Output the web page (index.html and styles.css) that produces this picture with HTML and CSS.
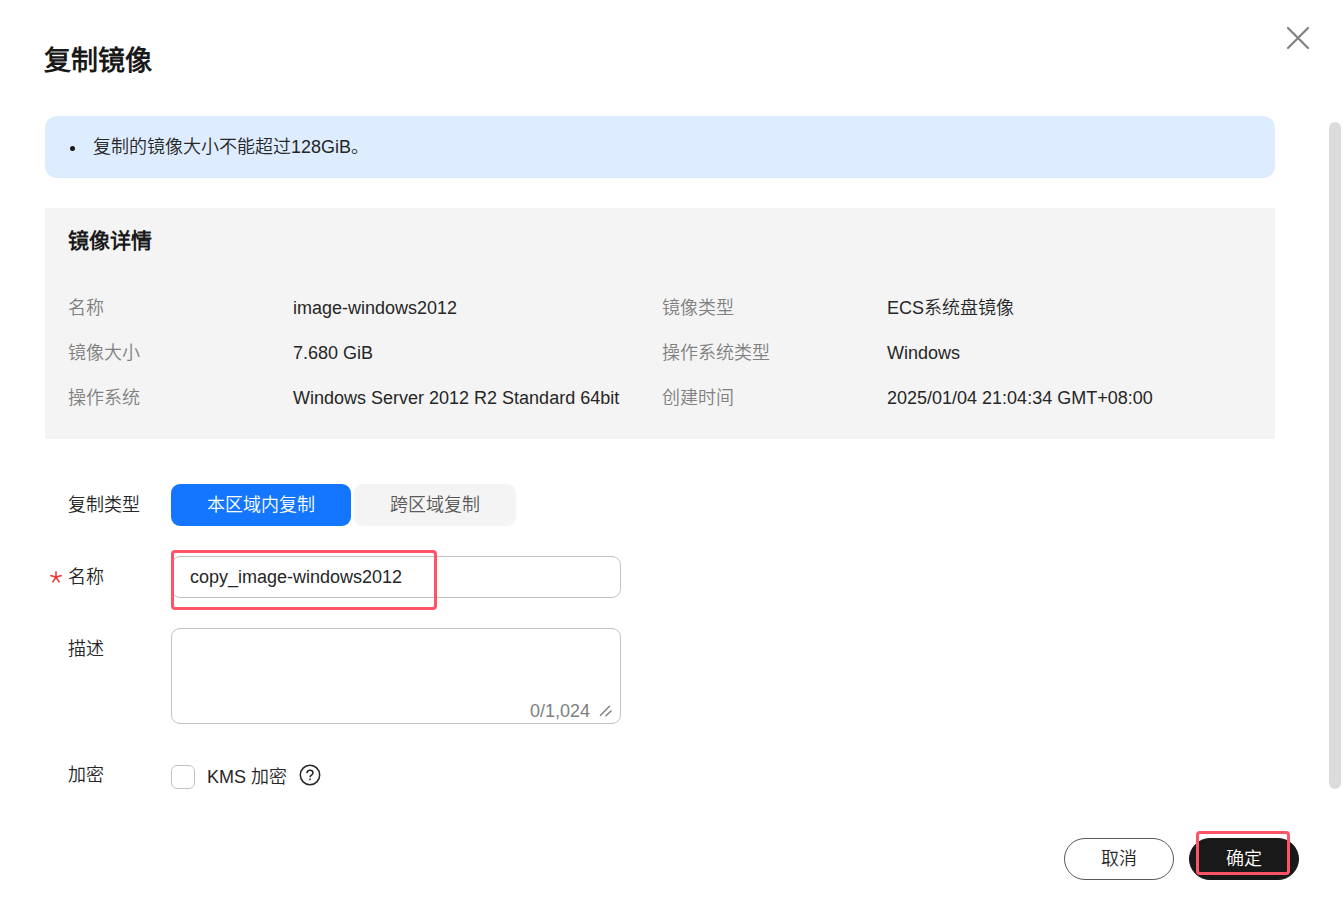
FILE: index.html
```html
<!DOCTYPE html>
<html lang="zh-CN">
<head>
<meta charset="utf-8">
<title>复制镜像</title>
<meta name="viewport" content="width=device-width, initial-scale=1">
<link rel="stylesheet" href="styles.css">
</head>
<body>
<main class="dialog">
  <header class="dialog-header">
    <h1 class="dialog-title">复制镜像</h1>
    <button class="close" type="button" aria-label="关闭">
      <svg viewBox="0 0 24 24" width="24" height="24" aria-hidden="true"><path d="M2 2 22 22M22 2 2 22"/></svg>
    </button>
  </header>

  <div class="dialog-body">
    <div class="content">
      <ul class="notice">
        <li>复制的镜像大小不能超过128GiB。</li>
      </ul>

      <section class="details">
        <h2 class="details-title">镜像详情</h2>
        <dl class="details-grid">
          <div class="pair"><dt>名称</dt><dd>image-windows2012</dd></div>
          <div class="pair"><dt>镜像类型</dt><dd>ECS系统盘镜像</dd></div>
          <div class="pair"><dt>镜像大小</dt><dd>7.680 GiB</dd></div>
          <div class="pair"><dt>操作系统类型</dt><dd>Windows</dd></div>
          <div class="pair"><dt>操作系统</dt><dd>Windows Server 2012 R2 Standard 64bit</dd></div>
          <div class="pair"><dt>创建时间</dt><dd>2025/01/04 21:04:34 GMT+08:00</dd></div>
        </dl>
      </section>

      <form class="form" id="copy-form">
        <div class="row">
          <span class="label" id="type-label">复制类型</span>
          <div class="segments" role="group" aria-labelledby="type-label">
            <button class="segment selected" type="button" aria-pressed="true">本区域内复制</button>
            <button class="segment" type="button" aria-pressed="false">跨区域复制</button>
          </div>
        </div>
        <div class="row">
          <label class="label required" for="name"><svg class="star" viewBox="0 0 12 12" width="12" height="12" aria-hidden="true"><path d="M6 6V.2M6 6 .3 4.500M6 6l5.700-1.500M6 6l-3.400 5.400M6 6l3.400 5.400"/></svg>名称</label>
          <div class="field">
            <input class="text-input" id="name" type="text" value="copy_image-windows2012">
            <span class="marker marker-name"></span>
          </div>
        </div>
        <div class="row">
          <label class="label" for="desc">描述</label>
          <div class="field">
            <textarea class="text-area" id="desc"></textarea>
            <span class="counter">0/1,024
              <svg viewBox="0 0 14 14" width="14" height="14" aria-hidden="true"><path d="M1.500 11.200 10.500 2.200M7 11.700l5-4.700"/></svg>
            </span>
          </div>
        </div>
        <div class="row">
          <span class="label">加密</span>
          <div class="check-group">
            <input class="checkbox" id="kms" type="checkbox">
            <label class="check-label" for="kms">KMS 加密</label>
            <button class="help" type="button" aria-label="帮助">
              <svg viewBox="0 0 22 22" width="22" height="22" aria-hidden="true"><circle cx="11" cy="11" r="9.700"/><path d="M8 9.200C8 7.300 9.200 6.200 11 6.200s3 1.100 3 2.700c0 2-3 2.300-3 4.300M11 14.400v1.800"/></svg>
            </button>
          </div>
        </div>
      </form>
    </div>
    <div class="scrollbar" aria-hidden="true"></div>
  </div>

  <footer class="dialog-footer">
    <button class="action" type="button">取消</button>
    <div class="action-wrap">
      <button class="action primary" type="submit" form="copy-form">确定</button>
      <span class="marker marker-ok"></span>
    </div>
  </footer>
</main>
</body>
</html>
```
FILE: styles.css
```css
* { box-sizing: border-box; }

body {
  margin: 0;
  background: #fff;
  color: #262626;
  font: 18px/24px "Liberation Sans", "Noto Sans CJK SC DemiLight", "Noto Sans CJK SC", sans-serif;
  font-weight: 350;
}

button, input, textarea { font: inherit; color: inherit; }
button { cursor: pointer; }
h1, h2, dl, dd, ul { margin: 0; }
svg { display: block; fill: none; stroke: currentColor; }

.dialog {
  display: flex;
  flex-direction: column;
  min-height: 100vh;
}

.dialog-header {
  display: flex;
  justify-content: space-between;
  align-items: flex-start;
  padding: 26px 34px 37px 44px;
}

.dialog-title {
  padding-top: 17px;
  color: #191919;
  font-size: 27px;
  line-height: 36px;
  font-weight: 700;
}

.close {
  padding: 0;
  border: 0;
  background: none;
  color: #808080;
}
.close svg { stroke-width: 2.2; stroke-linecap: round; }

.dialog-body {
  display: flex;
  gap: 54px;
  padding: 0 3px 0 45px;
}
.content { flex: 1; min-width: 0; }

.scrollbar {
  width: 12px;
  margin: 6px 0 7px;
  border-radius: 6px;
  background: #dbdbdb;
}

.notice {
  padding: 19px 24px;
  border-radius: 12px;
  background: #deecff;
  list-style: none;
}
.notice li {
  display: flex;
  align-items: center;
}
.notice li::before {
  content: "";
  width: 5px;
  height: 5px;
  margin: 3px 18px 0 1px;
  border-radius: 50%;
  background: #191919;
}

.details {
  margin-top: 30px;
  padding: 18px 19px 18px 23px;
  background: #f4f4f4;
}
.details-title {
  color: #191919;
  font-size: 21px;
  line-height: 30px;
  font-weight: 700;
}
.details-grid {
  display: grid;
  grid-template-columns: 1fr 1fr;
  margin-top: 30px;
}
.pair { display: flex; line-height: 45px; }
.pair dt { flex: none; width: 225px; color: #808080; }
.pair dd { white-space: nowrap; }

.form {
  display: flex;
  flex-direction: column;
  gap: 30px;
  margin-top: 45px;
  padding-left: 23px;
}
.row { display: flex; }
.label {
  position: relative;
  flex: none;
  width: 103px;
  line-height: 42px;
}
.star {
  position: absolute;
  left: -18px;
  top: 15px;
  color: #f23030;
  stroke-width: 1.5;
}

.segments { display: flex; gap: 3px; }
.segment {
  height: 42px;
  padding: 0 36px;
  border: 0;
  border-radius: 9px;
  background: #f4f4f4;
  color: #595959;
}
.segment.selected { background: #1476ff; color: #fff; font-weight: 400; }

.field { position: relative; width: 450px; }
.text-input, .text-area {
  display: block;
  width: 100%;
  border: 1px solid #c2c2c2;
  border-radius: 9px;
  background: #fff;
}
.text-input { height: 42px; padding: 0 18px; }
.text-area { height: 96px; padding: 8px 18px; resize: none; }
.counter {
  position: absolute;
  right: 8px;
  bottom: 1px;
  display: flex;
  align-items: center;
  gap: 9px;
  color: #808080;
}
.counter svg { stroke-width: 1.5; stroke-linecap: round; }

.check-group { display: flex; align-items: center; padding-top: 4px; }
.checkbox {
  appearance: none;
  width: 24px;
  height: 24px;
  margin: 0 12px 0 0;
  border: 1px solid #c2c2c2;
  border-radius: 6px;
  background: #fff;
}
.help {
  margin-left: 12px;
  padding: 0 0 4px;
  border: 0;
  background: none;
}
.help svg { stroke-width: 1.5; }

.dialog-footer {
  display: flex;
  justify-content: flex-end;
  gap: 15px;
  margin-top: auto;
  padding: 42px 45px 43px;
}
.action-wrap { position: relative; }
.action {
  width: 110px;
  height: 42px;
  padding: 0;
  border: 1px solid #595959;
  border-radius: 21px;
  background: #fff;
}
.action.primary {
  border-color: #191919;
  background: #191919;
  color: #fff;
  font-weight: 400;
}

.marker {
  position: absolute;
  border: 3px solid #ff5367;
  border-radius: 4px;
  pointer-events: none;
}
.marker-name { left: 0; top: -6px; width: 266px; height: 60px; }
.marker-ok { left: 7px; top: -7px; width: 94px; height: 44px; }
```
